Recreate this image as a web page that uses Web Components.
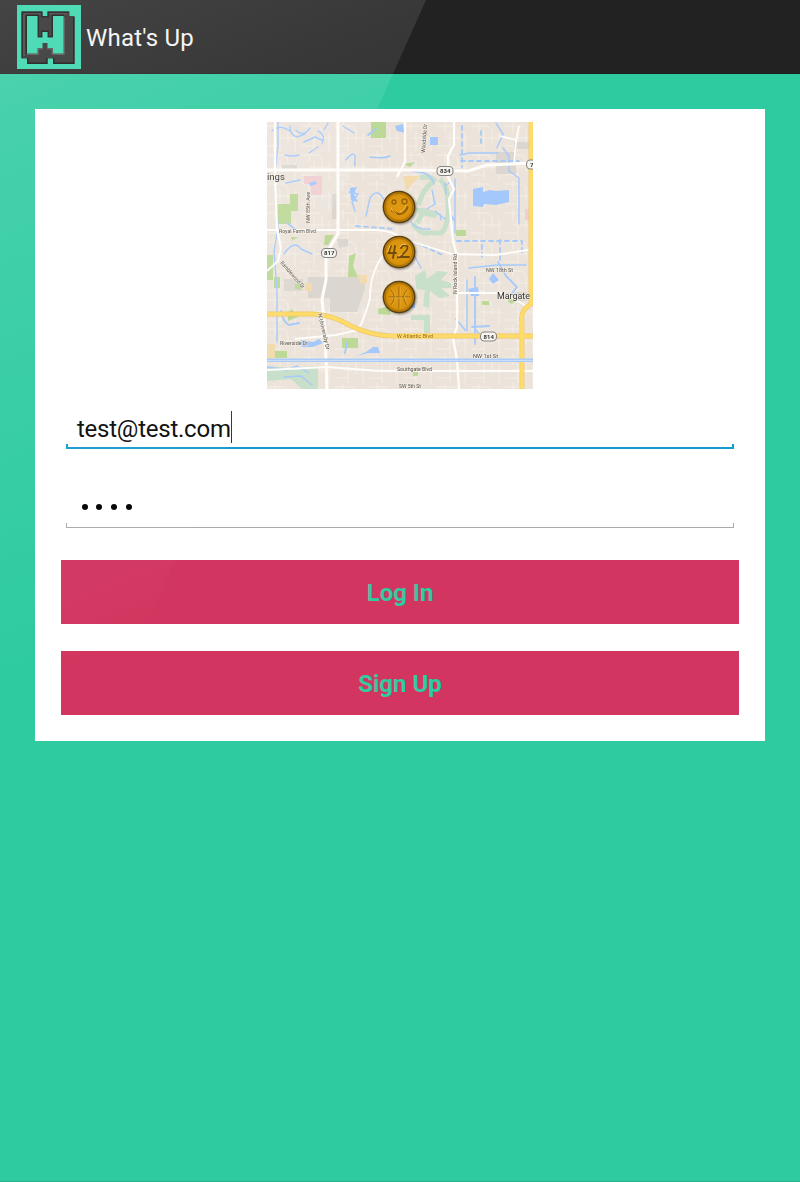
<!DOCTYPE html>
<html lang="en"><head><meta charset="utf-8"><title>What's Up</title>
<style>html,body{margin:0;height:100%}body{background:#2ecba0;font-family:Roboto,sans-serif}</style></head>
<body><whats-up-app></whats-up-app>
<script>
const define=(name,html)=>customElements.define(name,class extends HTMLElement{
  constructor(){super();this.attachShadow({mode:'open'}).innerHTML=html;}
});
define('w-logo',`<style>:host{display:block;position:relative;z-index:1;width:64px;height:64px}svg{display:block}</style>
<svg width="64" height="64" viewBox="0 0 64 64">
<rect width="64" height="64" fill="#50dbb7"/>
<path d="M4.5 6.5H25.5V11H30.5V6.5H52.5V11H57.5V59H36V53.5H30.5V59H10V53.5H4.5Z" fill="#484848"/>
<g fill="none" stroke-width="1.4">
<path d="M5.2 53V7.2H24.8V11.7H31.2V7.2H51.8" stroke="#333"/>
<path d="M7 51V9H23.5M32.5 9H50" stroke="#6b6b6b" stroke-width="1"/>
<path d="M10.7 53V58.3H29.8V53M36.7 53V58.3H56.8V12" stroke="#2d2d2d"/>
<path d="M9.3 49V10.3H21.2V31.8H24.8V26.3H31.2V31.8H35.3V10.3H47.2" stroke="#303030"/>
<path d="M10 49.2H21.2V43.7H26M30 43.7H35.3V49.2H47.2V12" stroke="#676767"/></g>
<path d="M10 11H20.5V32.5H25.5V27H30.5V32.5H36V11H46.5V48.5H36V43H30.5V38H25.5V43H20.5V48.5H10Z" fill="#50dbb7"/>
</svg>`);
define('app-bar',`<style>:host{display:flex;box-sizing:border-box;height:74px;padding:5px 0 0 17px;background:#222;border-bottom:1px solid #1c1d1d}
h1{margin:0 0 0 5px;font:400 24px/66px Roboto,sans-serif;letter-spacing:.2px;color:#f3f3f3}</style><slot name="icon"></slot><h1><slot></slot></h1>`);
define('map-coin',`<style>:host{display:block;width:34px;height:34px;filter:drop-shadow(1px 1px 1px #0007)}svg{display:block}.n{display:none}
:host([kind=smile]) .smile,:host([kind=rating]) .rating,:host([kind=ball]) .ball{display:block}</style>
<svg width="34" height="34" viewBox="0 0 34 34"><defs><radialGradient id="g"><stop stop-color="#e19b13"/><stop offset=".8" stop-color="#da930d"/><stop offset="1" stop-color="#c98607"/></radialGradient></defs>
<circle cx="17" cy="17" r="15.6" fill="#c98708" stroke="#5a3f0c" stroke-width="1.5"/><circle cx="17" cy="17" r="13.8" fill="url(#g)" stroke="#a06c0a" stroke-width=".9"/>
<g fill="none" stroke="#966208" stroke-width="1.3" stroke-linecap="round">
<g class="n smile"><circle cx="12" cy="12" r="2"/><circle cx="22.5" cy="11.5" r="2.5"/><path d="M10 21Q16 26 21 23Q25 20 25.5 17" stroke-width="2"/><path d="M9 18Q10 22 14 24M24 15Q23 20 18 22" stroke="#f0b747" stroke-width="1"/></g>
<g class="n rating"><path d="M9 11L6.5 18H14M13 11L11 23M19 13Q21 9 25 11Q27 14 21 19L18 22H27M16 22V22.5" stroke="#704a08" stroke-width="1.8"/><path d="M8 10.5L5.5 17M18 12Q20 8 24 9.5M20 19L17 21" stroke="#f5c869" stroke-width="1"/></g>
<g class="n ball" stroke-width="1"><path d="M17 7V28M7 17H28M9 10Q16 17 9 25M25 10Q18 17 25 25"/><path d="M18 7V28M7 18H28M10 10Q17 17 10 25M26 10Q19 17 26 25" stroke="#eab142" stroke-width=".7"/></g></g></svg>`);
define('city-map',`<style>:host{display:block;position:relative;width:266px;height:267px;overflow:hidden}svg{display:block}.map{filter:blur(.4px)}text{font-family:Roboto,sans-serif}
.coins{position:absolute;left:115px;top:68px;display:grid;row-gap:11px}</style>
<svg class="map" width="267" height="267" viewBox="0 0 267 267">
<defs><pattern id="streets" width="34" height="29" patternUnits="userSpaceOnUse"><path d="M0 4H17Q20 5 21 9V20M8 0V11M13 9V29M8 16H31M28 11V29M0 24H13" fill="none" stroke="#f6f0e9" stroke-width=".8"/></pattern></defs>
<rect width="267" height="267" fill="#ece4db"/><rect width="267" height="267" fill="url(#streets)"/>
<g fill="#dbd7d0"><path d="M41 155H98V167L90 190H63V176H41ZM17 157H36V169H17ZM65 72H71V97H65ZM70 117H81V124L72 126ZM229 30H249V52H229ZM247 20H263V27H247ZM15 43H30V49H15ZM248 170H260V179H248Z"/></g>
<g fill="#f2dbae"><path d="M136 54H153L139 69ZM91 153H100V161L93 162ZM38 161H45V169H38ZM0 222H8V238H0Z"/></g>
<g fill="#f0ced2"><path d="M37 54H55V73H44V62H37ZM258 87H264V98H258Z"/></g>
<g fill="#bdd998"><path d="M104 0H119V16H104ZM23 72H31V89H24V102H11V82H23ZM0 133H6V158H0ZM7 155H13V166H7ZM82 134L89 131L86 144L91 155H81ZM58 113H67L61 123H57ZM24 115H31L25 119ZM136 42L148 40L143 45ZM189 108H199V114H189ZM111 187L122 184L124 193L111 192ZM75 216H91V226H75ZM21 190L26 187V191L31 190V195L21 199ZM28 162H34V167H28ZM215 179H222V183H215ZM242 175L250 177L245 182L241 180ZM146 248H151V254H146ZM8 229H20V236H8Z"/></g>
<g fill="#c8dfca"><path d="M148 86Q158 85 172 91L168 96L151 92ZM148 154L158 148L160 157L171 149L181 150L174 158L184 161V166L174 166L183 174L173 176L163 169L162 186L156 184L158 168L149 167ZM144 193H163V211H157V198H144ZM0 244L25 246L51 244V267H35L24 257L0 259Z"/></g>
<path d="M153 56Q162 53 167 58L157 69L151 83M173 57Q181 65 181 79Q182 105 174 111H157Q148 107 146 101M157 89L150 101" fill="none" stroke="#c8dfca" stroke-width="5"/>
<g fill="#a4c8fc"><path d="M206 67L216 65V70L223 68L229 69L242 68V80L229 83L217 82L216 85L206 84ZM83 66L90 65L87 72L91 80L84 78ZM163 15H171V23H163ZM201 167L211 165L212 174H204ZM42 61L48 59L50 62L43 64ZM128 4L136 2L138 11L130 9ZM222 157L226 151L232 158L226 162ZM34 218L46 220L52 217L56 221L46 225H35ZM144 181H148V186H144ZM89 234L99 230L106 225H111L113 231H101Z"/></g>
<g fill="none" stroke="#a6cafb" stroke-width="1.4" stroke-linecap="round" stroke-linejoin="round">
<path d="M11 0V24L8 50L11 105L7 130L10 170V220M5 9Q13 1 24 10M29 8Q36 16 43 6M51 9Q59 13 55 22M76 4L87 11M18 33Q26 35 32 33M42 31L51 25M79 38Q86 29 88 34V44M103 35Q117 37 123 34M19 61L33 58M82 70L91 72L85 80L88 89M99 94L103 76Q111 64 118 80L120 91M17 132Q27 117 34 127L45 132M23 4Q23 13 30 15L38 12M61 1L57 8M145 49L157 51Q165 54 167 62M168 89L178 97M144 100Q149 108 163 107M178 61L179 72M147 133L154 146M188 57V111M200 158V209M202 146L230 143H259M208 181V207L215 215M236 26L242 34V49L252 56V102M193 33L202 31H231M229 1L236 12L230 26M165 68L168 82L160 87"/>
<path d="M37 20L48 15L55 18M20 101L28 107M14 189Q16 200 22 203L32 201M78 231L80 221M101 13L109 7M183 92L187 98M231 140L239 154L250 165L242 175M208 155V222M189 197L198 208M205 205L222 204" stroke-width="1.8"/>
<path d="M0 245L20 248L30 244L42 251M17 255L34 254L45 263M179 63L184 60M173 92L174 98"/>
<path d="M194 39H252M214 9V21M195 4V45M89 104L127 107M190 119H255V132M215 123V135M233 118V139M149 121L178 134" stroke-dasharray="4 4" stroke-width="1.8"/></g>
<g fill="none" stroke="#fffdfa" stroke-linejoin="round">
<path d="M0 48H145L201 49L220 43L267 41" stroke-width="3"/>
<path d="M71 0V112L59 132V158L55 177L58 208L60 267" stroke-width="3"/>
<path d="M8 0V48L10 108L14 126M187 0V23L181 34V55L187 67L182 77L186 119L190 134V205L186 216L190 238L192 267M138 0V40L130 55" stroke-width="2.3"/>
<path d="M0 108H107Q125 108 139 118L185 132L229 133L267 127M14 126L11 139L0 149M119 130Q103 148 103 176Q99 193 91 208L69 213L28 217M0 248L60 245L112 249H267M249 18L233 14M252 4L249 19L247 42M187 171H235L258 183" stroke-width="1.8"/></g>
<path d="M0 192H46Q66 193 84 204Q107 215 132 214H267M264 0V182Q253 188 255 200V267" fill="none" stroke="#edc661" stroke-width="4.8"/>
<path d="M0 192H46Q66 193 84 204Q107 215 132 214H267M264 0V182Q253 188 255 200V267" fill="none" stroke="#ffdc69" stroke-width="3.6"/>
<rect y="236.5" width="267" height="3.5" fill="#a9cbf9"/><rect y="238" width="267" height=".7" fill="#dce6f4"/>
<g fill="#56524e" font-size="5.5" stroke="#f4eee5" stroke-width="1" paint-order="stroke">
<text x="0" y="57.5" font-size="9.5" fill="#333">ings</text><text x="12" y="111" textLength="37" lengthAdjust="spacingAndGlyphs">Royal Farm Blvd</text><text x="230" y="177" font-size="8.7" textLength="33" fill="#333" lengthAdjust="spacingAndGlyphs">Margate</text>
<text x="13" y="223" textLength="28" lengthAdjust="spacingAndGlyphs">Riverside Dr</text><text x="130" y="216" textLength="36" lengthAdjust="spacingAndGlyphs" fill="#93651e" stroke="#ffe06b">W Atlantic Blvd</text><text x="130" y="249" textLength="35" lengthAdjust="spacingAndGlyphs">Southgate Blvd</text><text x="132" y="266" textLength="22" lengthAdjust="spacingAndGlyphs">SW 5th St</text><text x="206" y="236" textLength="25" lengthAdjust="spacingAndGlyphs">NW 1st St</text><text x="219" y="150" textLength="27" lengthAdjust="spacingAndGlyphs">NW 18th St</text>
<text transform="translate(43 101)rotate(-90)" textLength="31" lengthAdjust="spacingAndGlyphs">NW 85th Ave</text><text transform="translate(158 31)rotate(-86)" textLength="29" lengthAdjust="spacingAndGlyphs">Woodside Dr</text><text transform="translate(190 172)rotate(-90)" textLength="40" lengthAdjust="spacingAndGlyphs">N Rock Island Rd</text><text transform="translate(13 141)rotate(49)" textLength="34" lengthAdjust="spacingAndGlyphs">Ramblewood Dr</text><text transform="translate(51 192)rotate(77)" textLength="37" lengthAdjust="spacingAndGlyphs">N University Dr</text></g>
<g fill="#f7f5f0" stroke="#858585" stroke-width="1.1"><rect x="170" y="44.5" width="16" height="9" rx="4"/><rect x="54.5" y="126.5" width="15" height="9" rx="4"/><rect x="213.5" y="210" width="16" height="9" rx="4"/><rect x="259.5" y="38" width="14" height="9" rx="4"/></g>
<g font-size="6" font-weight="700" fill="#333"><text x="173" y="51.2">834</text><text x="57" y="133.2">817</text><text x="216.5" y="216.8">814</text><text x="263" y="44.8">7</text></g>
</svg><div class="coins"><map-coin kind="smile"></map-coin><map-coin kind="rating"></map-coin><map-coin kind="ball"></map-coin></div>`);
define('text-field',`<style>:host{display:flex;box-sizing:border-box;width:668px;height:39px;padding-left:11px;background:linear-gradient(var(--line,#aaa),var(--line,#aaa)) bottom/100% var(--w,1px) no-repeat,linear-gradient(var(--line,#aaa),var(--line,#aaa)) left bottom/var(--w,1px) 5px no-repeat,linear-gradient(var(--line,#aaa),var(--line,#aaa)) right bottom/var(--w,1px) 5px no-repeat;font:400 24px/36px Roboto,sans-serif;letter-spacing:-.24px;color:#090909}
.caret{display:none;width:1px;height:32px;background:#333}:host([focused]){--line:#159bcf;--w:2px}:host([focused]) .caret{display:block}</style><slot></slot><i class="caret"></i>`);
define('password-dots',`<style>:host{display:flex;gap:8.7px;padding:15px 0 0 4.5px}i{width:6px;height:6px;border-radius:50%;background:#000}</style><i></i><i></i><i></i><i></i>`);
define('action-button',`<style>:host{display:block}button{display:block;width:678px;height:64px;border:0;padding:2px 0 0;background:#d23660;color:#2fcba1;font:700 24px/62px Roboto,sans-serif}</style><button><slot></slot></button>`);
define('login-card',`<style>:host{display:flex;flex-direction:column;align-items:center;box-sizing:border-box;width:730px;height:632px;margin:35px auto 0;padding-top:13px;background:#fff}
text-field:first-of-type{margin-top:21px;height:39px;padding-top:1px}text-field+text-field{margin-top:40px}action-button{margin-top:32px}action-button+action-button{margin-top:27px}</style>
<city-map></city-map><text-field focused>test@test.com</text-field><text-field><password-dots></password-dots></text-field><action-button>Log In</action-button><action-button>Sign Up</action-button>`);
define('screen-glare',`<style>:host{position:absolute;inset:0;pointer-events:none}svg{display:block}</style>
<svg width="800" height="1182"><defs><linearGradient id="a" gradientUnits="userSpaceOnUse" x1="0" y1="0" x2="241" y2="603"><stop stop-color="#fff" stop-opacity=".155"/><stop offset=".26" stop-color="#fff" stop-opacity=".1"/><stop offset="1" stop-color="#fff" stop-opacity="0"/></linearGradient></defs><path d="M0 0H426L0 950Z" fill="url(#a)"/></svg>`);
define('whats-up-app',`<style>:host{display:block;position:relative;box-sizing:border-box;height:1182px;background:#2ecba0;border-bottom:1px solid #28ad89;overflow:hidden}</style>
<app-bar><w-logo slot="icon"></w-logo>What's Up</app-bar><login-card></login-card><screen-glare></screen-glare>`);
</script></body></html>
